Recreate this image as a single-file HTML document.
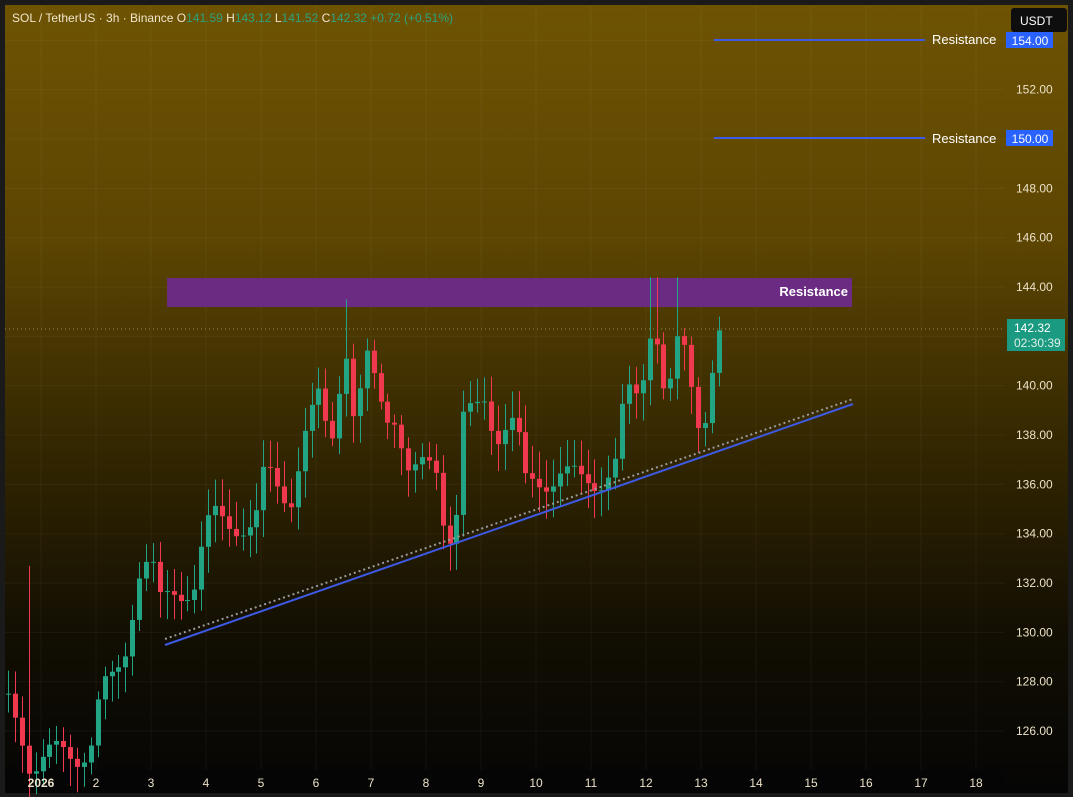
<!DOCTYPE html><html><head><style>
body{margin:0;width:1073px;height:797px;overflow:hidden;background:#151515;font-family:"Liberation Sans",sans-serif}
#c{position:absolute;left:0;top:0}
</style></head><body>
<svg id="c" width="1073" height="797" xmlns="http://www.w3.org/2000/svg">
<defs><linearGradient id="g" x1="0" y1="0" x2="0" y2="1">
<stop offset="0" stop-color="#6e5303"/><stop offset="0.3" stop-color="#5c4502"/><stop offset="0.55" stop-color="#352801"/><stop offset="0.8" stop-color="#120e02"/><stop offset="1" stop-color="#050505"/></linearGradient></defs>
<rect x="0" y="0" width="1073" height="797" fill="#1a1a1a"/>
<rect x="5" y="5" width="1063" height="788" fill="url(#g)"/>
<rect x="5" y="770" width="1000" height="23" fill="#050505"/>
<g id="grid" stroke="#ffffff" stroke-opacity="0.045" stroke-width="1"></g>
<rect x="167" y="278" width="685" height="29" fill="#6c2b82"/>
<text x="848" y="296" fill="#fff" font-size="13" font-weight="bold" text-anchor="end">Resistance</text>
<line x1="5" y1="329" x2="1005" y2="329" stroke="#c9a56a" stroke-dasharray="1 3" stroke-opacity="0.7"/>
<g id="cd"></g>
<line x1="165" y1="639" x2="853" y2="399" stroke="#9a9a9a" stroke-width="2" stroke-dasharray="2 3"/>
<line x1="165" y1="645" x2="853" y2="404" stroke="#3d5ae6" stroke-width="2"/>
<line x1="714" y1="40" x2="925" y2="40" stroke="#3d5ae6" stroke-width="2"/>
<line x1="714" y1="138" x2="925" y2="138" stroke="#3d5ae6" stroke-width="2"/>
<text x="932" y="44" fill="#fff" font-size="13">Resistance</text>
<text x="932" y="143" fill="#fff" font-size="13">Resistance</text>
<g id="ax" font-size="12" fill="#ece2c8"></g>
<rect x="1006" y="32" width="47" height="16" fill="#2962ff"/>
<text x="1030" y="45" fill="#fff" font-size="12" text-anchor="middle">154.00</text>
<rect x="1006" y="130" width="47" height="16" fill="#2962ff"/>
<text x="1030" y="143" fill="#fff" font-size="12" text-anchor="middle">150.00</text>
<rect x="1007" y="319" width="58" height="32" fill="#1a9a80"/>
<text x="1014" y="332" fill="#fff" font-size="12">142.32</text>
<text x="1014" y="347" fill="#e0f0e8" font-size="12">02:30:39</text>
<rect x="1011" y="8" width="56" height="24" rx="3" fill="#0e0e0e"/>
<text x="1020" y="25" fill="#fff" font-size="12">USDT</text>
<text x="12" y="22" font-size="12" fill="#f0e6cc">SOL / TetherUS · 3h · Binance  O<tspan fill="#2ca37f">141.59 </tspan> H<tspan fill="#2ca37f">143.12 </tspan> L<tspan fill="#2ca37f">141.52 </tspan> C<tspan fill="#2ca37f">142.32  +0.72 (+0.51%)</tspan></text>
</svg>
<script>
var NS="http://www.w3.org/2000/svg";
function y(p){return 287+(144-p)*24.67}
function el(t,a,par){var e=document.createElementNS(NS,t);for(var k in a)if(k!="_t")e.setAttribute(k,a[k]);document.getElementById(par).appendChild(e);return e}
var days=[["2026",41],["2",96],["3",151],["4",206],["5",261],["6",316],["7",371],["8",426],["9",481],["10",536],["11",591],["12",646],["13",701],["14",756],["15",811],["16",866],["17",921],["18",976]];
days.forEach(function(d){el("line",{x1:d[1],y1:5,x2:d[1],y2:770},"grid");var t=el("text",{x:d[1],y:787,"text-anchor":"middle","font-weight":d[0]=="2026"?"bold":"normal"},"ax");t.textContent=d[0];});
for(var p=126;p<=154;p+=2){var yy=y(p);el("line",{x1:5,y1:yy,x2:1005,y2:yy},"grid");if(p!=154&&p!=150){var t=el("text",{x:1016,y:yy+4},"ax");t.textContent=p.toFixed(2);}}
var W=[[8,127],[20,126],[30,124.7],[45,125],[75,125],[90,125.5],[100,127.5],[115,128],[130,130],[135,132.5],[150,133],[160,131],[175,131.7],[195,132],[205,134],[215,134.6],[235,134.5],[255,134.2],[265,136.5],[290,135.5],[305,138],[320,139.5],[330,137.5],[345,142],[355,138],[365,141],[385,139],[395,139],[410,136],[420,136.5],[435,137],[445,134.3],[455,133.8],[462,138.5],[475,138.8],[485,139.5],[495,138.1],[505,138.5],[515,138.5],[525,135.9],[540,136.2],[560,136.5],[580,136],[600,136.3],[615,136.8],[625,139.5],[640,139.5],[648,142.4],[655,142.8],[662,140],[670,139.8],[680,142],[690,140.2],[700,138.4],[708,139.5],[714,141.6],[721,142.3]];
function interp(x){for(var i=0;i<W.length-1;i++){if(x<=W[i+1][0]){var a=W[i],b=W[i+1];return a[1]+(b[1]-a[1])*(x-a[0])/(b[0]-a[0]);}}return W[W.length-1][1]}
var prev=127.5;
for(var x=8;x<=722;x+=6.9){var c=interp(x)+Math.sin(x*1.7)*0.6;var o=prev;var hi=Math.max(o,c)+0.3+Math.abs(Math.sin(x*0.9))*0.8;var lo=Math.min(o,c)-0.3-Math.abs(Math.cos(x*1.3))*0.8;
if(Math.abs(x-28.7)<3)hi=132.7;if(Math.abs(x-653)<4)hi=144.4;if(Math.abs(x-680)<4)hi=144.4;if(Math.abs(x-345)<4)hi=143.5;
var col=c>=o?"#22a584":"#f0394f";var cx=Math.round(x)+0.5;
el("line",{x1:cx,y1:y(hi),x2:cx,y2:y(lo),stroke:col,"stroke-width":1},"cd");
var t=y(Math.max(o,c)),b=y(Math.min(o,c));el("rect",{x:cx-2.5,y:t,width:5,height:Math.max(1,b-t),fill:col},"cd");prev=c;}
</script>
</body></html>
